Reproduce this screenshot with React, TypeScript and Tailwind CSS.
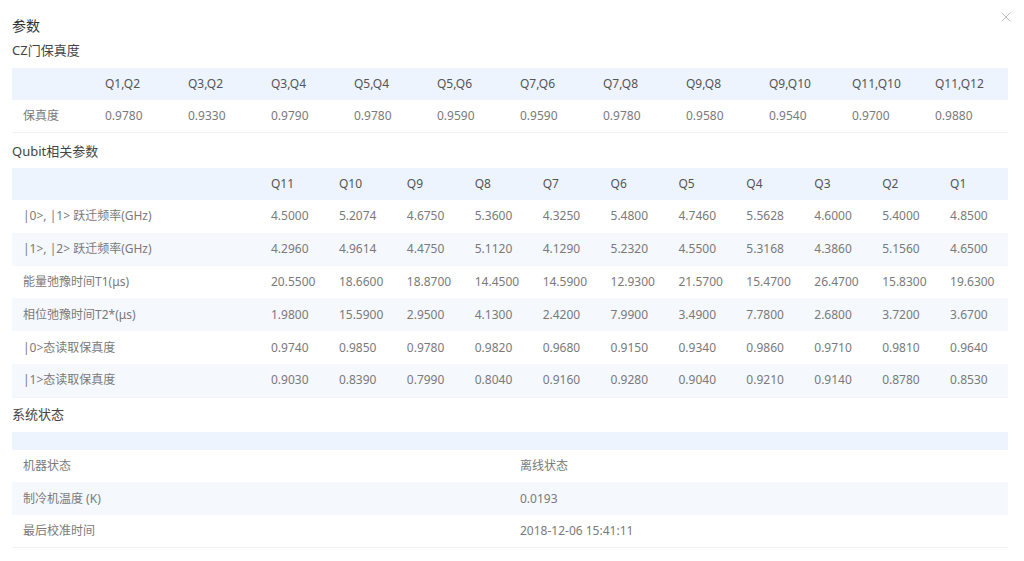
import { X } from 'lucide-react';

const czCols = ['Q1,Q2', 'Q3,Q2', 'Q3,Q4', 'Q5,Q4', 'Q5,Q6', 'Q7,Q6', 'Q7,Q8', 'Q9,Q8', 'Q9,Q10', 'Q11,Q10', 'Q11,Q12'];
const czVals = ['0.9780', '0.9330', '0.9790', '0.9780', '0.9590', '0.9590', '0.9780', '0.9580', '0.9540', '0.9700', '0.9880'];

const qCols = ['Q11', 'Q10', 'Q9', 'Q8', 'Q7', 'Q6', 'Q5', 'Q4', 'Q3', 'Q2', 'Q1'];
const qRows: [string, string[]][] = [
  ['|0>, |1> 跃迁频率(GHz)', ['4.5000', '5.2074', '4.6750', '5.3600', '4.3250', '5.4800', '4.7460', '5.5628', '4.6000', '5.4000', '4.8500']],
  ['|1>, |2> 跃迁频率(GHz)', ['4.2960', '4.9614', '4.4750', '5.1120', '4.1290', '5.2320', '4.5500', '5.3168', '4.3860', '5.1560', '4.6500']],
  ['能量弛豫时间T1(μs)', ['20.5500', '18.6600', '18.8700', '14.4500', '14.5900', '12.9300', '21.5700', '15.4700', '26.4700', '15.8300', '19.6300']],
  ['相位弛豫时间T2*(μs)', ['1.9800', '15.5900', '2.9500', '4.1300', '2.4200', '7.9900', '3.4900', '7.7800', '2.6800', '3.7200', '3.6700']],
  ['|0>态读取保真度', ['0.9740', '0.9850', '0.9780', '0.9820', '0.9680', '0.9150', '0.9340', '0.9860', '0.9710', '0.9810', '0.9640']],
  ['|1>态读取保真度', ['0.9030', '0.8390', '0.7990', '0.8040', '0.9160', '0.9280', '0.9040', '0.9210', '0.9140', '0.8780', '0.8530']],
];

const sysRows = [
  ['机器状态', '离线状态'],
  ['制冷机温度 (K)', '0.0193'],
  ['最后校准时间', '2018-12-06 15:41:11'],
];

const rowBg = (i: number) => (i % 2 === 1 ? 'bg-[#f5f8fd]' : 'bg-white');

export default function App() {
  return (
    <div
      className="relative h-[561px] w-[1024px] bg-white pl-3 pr-4 text-[12px] text-[#7a7a7a]"
      style={{ fontFamily: '"Noto Sans", "Noto Sans CJK SC", sans-serif' }}
    >
      <X className="absolute right-[10px] top-[9px] h-4 w-4 text-[#b5b5b5]" strokeWidth={1.25} />
      <div className="pt-[15px] text-[14px] leading-[22px] text-[#333]">参数</div>
      <div className="mt-[2px] text-[13px] leading-[22px] text-[#444]">CZ门保真度</div>

      <div className="mt-[7px] border-b border-[#f0f3f8]">
        <div className="grid h-8 grid-cols-12 items-center bg-[#edf4fe] text-[#555]">
          <div />
          {czCols.map((c) => (
            <div key={c} className="pl-[10px]">{c}</div>
          ))}
        </div>
        <div className="grid h-8 grid-cols-12 items-center">
          <div className="pl-[11px]">保真度</div>
          {czVals.map((v, i) => (
            <div key={i} className="pl-[10px]">{v}</div>
          ))}
        </div>
      </div>

      <div className="mt-[7px] text-[13px] leading-[22px] text-[#444]">Qubit相关参数</div>
      <div className="mt-[6px] border-b border-[#f0f3f8]">
        <div className="grid h-8 grid-cols-[249px_repeat(11,1fr)] items-center bg-[#edf4fe] text-[#555]">
          <div />
          {qCols.map((c) => (
            <div key={c} className="pl-[10px]">{c}</div>
          ))}
        </div>
        {qRows.map(([label, vals], r) => (
          <div key={label} className={`grid h-[32.8px] grid-cols-[249px_repeat(11,1fr)] items-center ${rowBg(r)}`}>
            <div className="pl-[11px]">{label}</div>
            {vals.map((v, i) => (
              <div key={i} className="pl-[10px]">{v}</div>
            ))}
          </div>
        ))}
      </div>

      <div className="mt-[5px] text-[13px] leading-[22px] text-[#444]">系统状态</div>
      <div className="mt-[7px] border-b border-[#f0f3f8]">
        <div className="h-[18px] bg-[#edf4fe]" />
        {sysRows.map(([k, v], r) => (
          <div key={k} className={`grid h-[32.5px] grid-cols-2 items-center ${rowBg(r)}`}>
            <div className="pl-[11px]">{k}</div>
            <div className="pl-[10px]">{v}</div>
          </div>
        ))}
      </div>
    </div>
  );
}
